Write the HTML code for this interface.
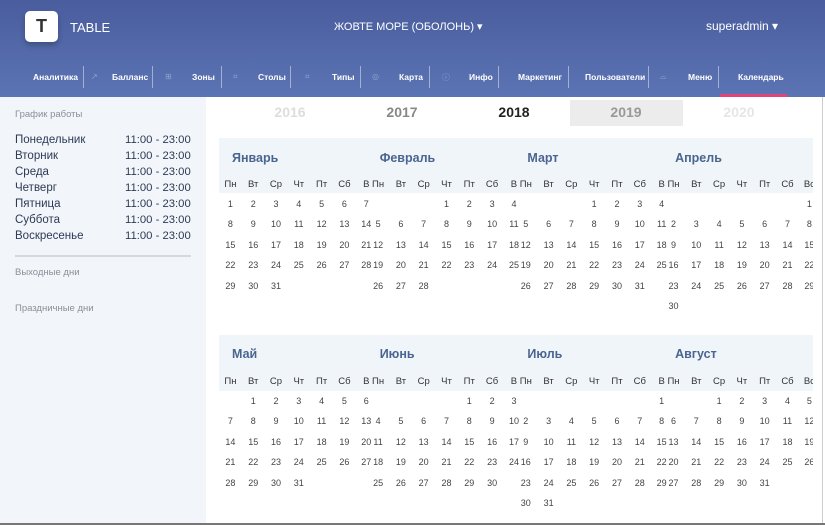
<!DOCTYPE html>
<html><head><meta charset="utf-8"><style>
*{margin:0;padding:0;box-sizing:border-box}
body{width:825px;height:525px;overflow:hidden;background:#fff;font-family:"Liberation Sans","DejaVu Sans",sans-serif;position:relative}
.hdr{position:absolute;left:0;top:0;width:825px;height:97px;background:linear-gradient(#4a5d9e,#5b74b4)}
.logo{position:absolute;left:25px;top:11px;width:33px;height:31px;background:#fff;border-radius:5px;box-shadow:0 3px 6px rgba(0,0,0,.25);color:#333;font-size:18px;font-weight:bold;text-align:center;line-height:31px}
.w{position:absolute;color:#fff;white-space:nowrap}
.nav{position:absolute;top:72px;font-size:8.5px;font-weight:bold;color:#fff;white-space:nowrap}
.sep{position:absolute;top:66px;width:1px;height:22px;background:rgba(255,255,255,.45)}
.ic{position:absolute;top:72px;font-size:8px;color:rgba(255,255,255,.35)}
.side{position:absolute;left:0;top:97px;width:206px;height:428px;background:#f2f6fa}
.sl{position:absolute;left:15px;font-size:9.5px;color:#8a8f99}
.d{position:absolute;left:15px;font-size:11.5px;color:#2d3a55}
.t{position:absolute;left:125px;font-size:11.3px;color:#2d3a55}
.yr{position:absolute;top:104px;font-size:14px;font-weight:bold;width:60px;text-align:center}
.cal{position:absolute;left:219px;top:0;width:594px;height:525px;overflow:hidden}
.band{position:absolute;left:0;width:594px;background:#f0f5fa}
.m{position:absolute;width:148px}
.mn{position:absolute;left:1px;font-size:12.5px;font-weight:bold;color:#4a6590}
.g{position:absolute;left:0;display:grid;grid-template-columns:repeat(6,22.8px) 21px;white-space:nowrap}
.g span{text-align:center;height:20.4px;line-height:20.4px;font-size:9px;color:#444}
.h span{font-size:9.5px;color:#333}
</style></head><body>
<div class="hdr">
<div class="logo">T</div>
<div class="w" style="left:70px;top:20px;font-size:13px">TABLE</div>
<div class="w" style="left:334px;top:20px;font-size:11px">ЖОВТЕ МОРЕ (ОБОЛОНЬ) ▾</div>
<div class="w" style="left:706px;top:19px;font-size:12px">superadmin ▾</div>
<div class="nav" style="left:33px">Аналитика</div><div class="sep" style="left:83px"></div>
<div class="ic" style="left:91px">↗</div><div class="nav" style="left:112px">Балланс</div><div class="sep" style="left:152px"></div>
<div class="ic" style="left:165px">⊞</div><div class="nav" style="left:192px">Зоны</div><div class="sep" style="left:221px"></div>
<div class="ic" style="left:233px">⌗</div><div class="nav" style="left:258px">Столы</div><div class="sep" style="left:290px"></div>
<div class="ic" style="left:305px">⌗</div><div class="nav" style="left:332px">Типы</div><div class="sep" style="left:360px"></div>
<div class="ic" style="left:372px">◎</div><div class="nav" style="left:399px">Карта</div><div class="sep" style="left:429px"></div>
<div class="ic" style="left:442px">ⓘ</div><div class="nav" style="left:469px">Инфо</div><div class="sep" style="left:498px"></div>
<div class="nav" style="left:518px">Маркетинг</div><div class="sep" style="left:568px"></div>
<div class="nav" style="left:585px">Пользователи</div><div class="sep" style="left:648px"></div>
<div class="ic" style="left:660px">⌓</div><div class="nav" style="left:688px">Меню</div><div class="sep" style="left:718px"></div>
<div class="nav" style="left:738px">Календарь</div>
<div style="position:absolute;left:720px;top:94px;width:67px;height:3px;background:#e0457a"></div>
</div>
<div class="side">
<div class="sl" style="top:12px">График работы</div>
<div class="d" style="top:37px">Понедельник</div><div class="t" style="top:37px">11:00 - 23:00</div>
<div class="d" style="top:53px">Вторник</div><div class="t" style="top:53px">11:00 - 23:00</div>
<div class="d" style="top:69px">Среда</div><div class="t" style="top:69px">11:00 - 23:00</div>
<div class="d" style="top:85px">Четверг</div><div class="t" style="top:85px">11:00 - 23:00</div>
<div class="d" style="top:101px">Пятница</div><div class="t" style="top:101px">11:00 - 23:00</div>
<div class="d" style="top:117px">Суббота</div><div class="t" style="top:117px">11:00 - 23:00</div>
<div class="d" style="top:133px">Воскресенье</div><div class="t" style="top:133px">11:00 - 23:00</div>
<div style="position:absolute;left:15px;top:158px;width:176px;height:2px;background:#d5d9de"></div>
<div class="sl" style="top:170px">Выходные дни</div>
<div class="sl" style="top:206px">Праздничные дни</div>
</div>
<div style="position:absolute;left:570px;top:100px;width:113px;height:26px;background:#ececec"></div>
<div class="yr" style="left:260px;color:#ddd">2016</div>
<div class="yr" style="left:372px;color:#888">2017</div>
<div class="yr" style="left:484px;color:#222">2018</div>
<div class="yr" style="left:596px;color:#999">2019</div>
<div class="yr" style="left:709px;color:#e6e6e6">2020</div>
<div class="cal">
<div class="band" style="top:138px;height:55px"></div>
<div class="band" style="top:335px;height:56px"></div>

<div class="m" style="left:0;top:0"><div class="mn" style="left:13px;top:151px">Январь</div>
<div class="g h" style="top:175px"><span>Пн</span><span>Вт</span><span>Ср</span><span>Чт</span><span>Пт</span><span>Сб</span><span>В</span></div>
<div class="g" style="top:194px"><span>1</span><span>2</span><span>3</span><span>4</span><span>5</span><span>6</span><span>7</span><span>8</span><span>9</span><span>10</span><span>11</span><span>12</span><span>13</span><span>14</span><span>15</span><span>16</span><span>17</span><span>18</span><span>19</span><span>20</span><span>21</span><span>22</span><span>23</span><span>24</span><span>25</span><span>26</span><span>27</span><span>28</span><span>29</span><span>30</span><span>31</span></div></div>

<div class="m" style="left:147.7px;top:0"><div class="mn" style="left:13px;top:151px">Февраль</div>
<div class="g h" style="top:175px"><span>Пн</span><span>Вт</span><span>Ср</span><span>Чт</span><span>Пт</span><span>Сб</span><span>В</span></div>
<div class="g" style="top:194px"><span></span><span></span><span></span><span>1</span><span>2</span><span>3</span><span>4</span><span>5</span><span>6</span><span>7</span><span>8</span><span>9</span><span>10</span><span>11</span><span>12</span><span>13</span><span>14</span><span>15</span><span>16</span><span>17</span><span>18</span><span>19</span><span>20</span><span>21</span><span>22</span><span>23</span><span>24</span><span>25</span><span>26</span><span>27</span><span>28</span></div></div>

<div class="m" style="left:295.4px;top:0"><div class="mn" style="left:13px;top:151px">Март</div>
<div class="g h" style="top:175px"><span>Пн</span><span>Вт</span><span>Ср</span><span>Чт</span><span>Пт</span><span>Сб</span><span>В</span></div>
<div class="g" style="top:194px"><span></span><span></span><span></span><span>1</span><span>2</span><span>3</span><span>4</span><span>5</span><span>6</span><span>7</span><span>8</span><span>9</span><span>10</span><span>11</span><span>12</span><span>13</span><span>14</span><span>15</span><span>16</span><span>17</span><span>18</span><span>19</span><span>20</span><span>21</span><span>22</span><span>23</span><span>24</span><span>25</span><span>26</span><span>27</span><span>28</span><span>29</span><span>30</span><span>31</span></div></div>

<div class="m" style="left:443.1px;top:0"><div class="mn" style="left:13px;top:151px">Апрель</div>
<div class="g h" style="top:175px"><span>Пн</span><span>Вт</span><span>Ср</span><span>Чт</span><span>Пт</span><span>Сб</span><span>Вс</span></div>
<div class="g" style="top:194px"><span></span><span></span><span></span><span></span><span></span><span></span><span>1</span><span>2</span><span>3</span><span>4</span><span>5</span><span>6</span><span>7</span><span>8</span><span>9</span><span>10</span><span>11</span><span>12</span><span>13</span><span>14</span><span>15</span><span>16</span><span>17</span><span>18</span><span>19</span><span>20</span><span>21</span><span>22</span><span>23</span><span>24</span><span>25</span><span>26</span><span>27</span><span>28</span><span>29</span><span>30</span></div></div>

<div class="m" style="left:0;top:0"><div class="mn" style="left:13px;top:347px">Май</div>
<div class="g h" style="top:372px"><span>Пн</span><span>Вт</span><span>Ср</span><span>Чт</span><span>Пт</span><span>Сб</span><span>В</span></div>
<div class="g" style="top:391px"><span></span><span>1</span><span>2</span><span>3</span><span>4</span><span>5</span><span>6</span><span>7</span><span>8</span><span>9</span><span>10</span><span>11</span><span>12</span><span>13</span><span>14</span><span>15</span><span>16</span><span>17</span><span>18</span><span>19</span><span>20</span><span>21</span><span>22</span><span>23</span><span>24</span><span>25</span><span>26</span><span>27</span><span>28</span><span>29</span><span>30</span><span>31</span></div></div>

<div class="m" style="left:147.7px;top:0"><div class="mn" style="left:13px;top:347px">Июнь</div>
<div class="g h" style="top:372px"><span>Пн</span><span>Вт</span><span>Ср</span><span>Чт</span><span>Пт</span><span>Сб</span><span>В</span></div>
<div class="g" style="top:391px"><span></span><span></span><span></span><span></span><span>1</span><span>2</span><span>3</span><span>4</span><span>5</span><span>6</span><span>7</span><span>8</span><span>9</span><span>10</span><span>11</span><span>12</span><span>13</span><span>14</span><span>15</span><span>16</span><span>17</span><span>18</span><span>19</span><span>20</span><span>21</span><span>22</span><span>23</span><span>24</span><span>25</span><span>26</span><span>27</span><span>28</span><span>29</span><span>30</span></div></div>

<div class="m" style="left:295.4px;top:0"><div class="mn" style="left:13px;top:347px">Июль</div>
<div class="g h" style="top:372px"><span>Пн</span><span>Вт</span><span>Ср</span><span>Чт</span><span>Пт</span><span>Сб</span><span>В</span></div>
<div class="g" style="top:391px"><span></span><span></span><span></span><span></span><span></span><span></span><span>1</span><span>2</span><span>3</span><span>4</span><span>5</span><span>6</span><span>7</span><span>8</span><span>9</span><span>10</span><span>11</span><span>12</span><span>13</span><span>14</span><span>15</span><span>16</span><span>17</span><span>18</span><span>19</span><span>20</span><span>21</span><span>22</span><span>23</span><span>24</span><span>25</span><span>26</span><span>27</span><span>28</span><span>29</span><span>30</span><span>31</span></div></div>

<div class="m" style="left:443.1px;top:0"><div class="mn" style="left:13px;top:347px">Август</div>
<div class="g h" style="top:372px"><span>Пн</span><span>Вт</span><span>Ср</span><span>Чт</span><span>Пт</span><span>Сб</span><span>Вс</span></div>
<div class="g" style="top:391px"><span></span><span></span><span>1</span><span>2</span><span>3</span><span>4</span><span>5</span><span>6</span><span>7</span><span>8</span><span>9</span><span>10</span><span>11</span><span>12</span><span>13</span><span>14</span><span>15</span><span>16</span><span>17</span><span>18</span><span>19</span><span>20</span><span>21</span><span>22</span><span>23</span><span>24</span><span>25</span><span>26</span><span>27</span><span>28</span><span>29</span><span>30</span><span>31</span></div></div>
</div>
<div style="position:absolute;left:822px;top:97px;width:1px;height:428px;background:#ccc"></div>
<div style="position:absolute;left:0;top:523px;width:825px;height:2px;background:#777"></div>
</body></html>
